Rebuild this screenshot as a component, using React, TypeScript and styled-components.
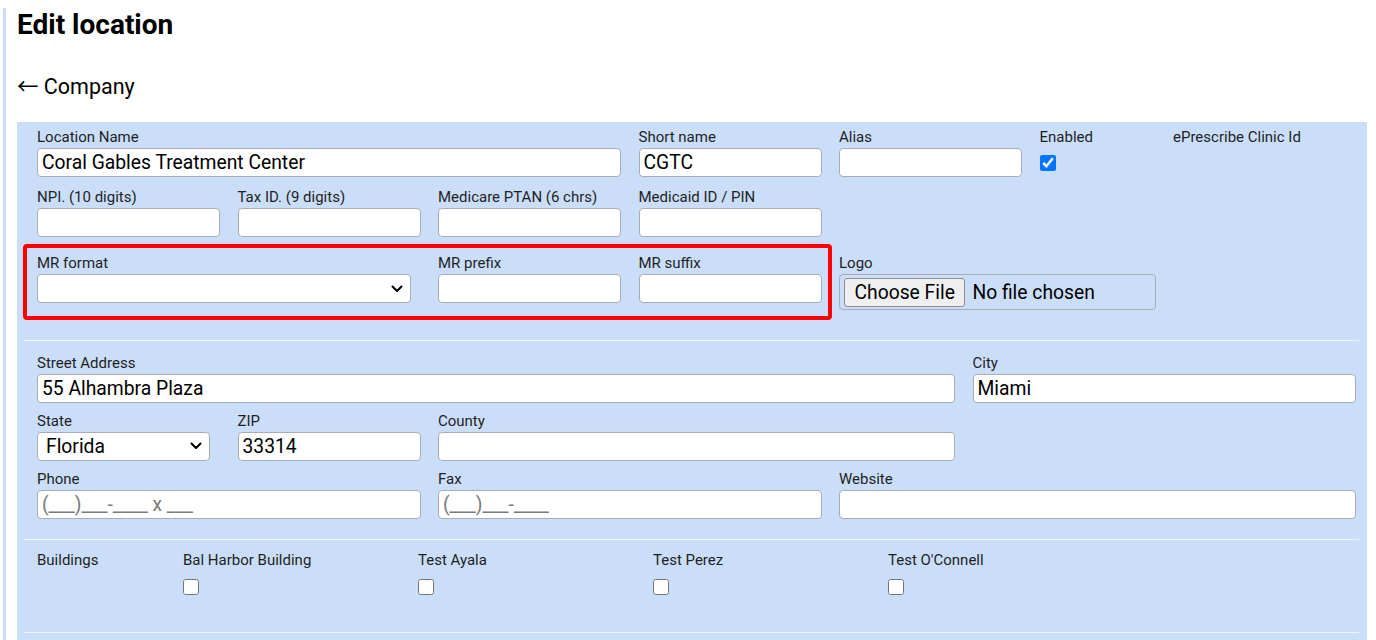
import React from "react";
import styled, { createGlobalStyle } from "styled-components";

const GlobalStyle = createGlobalStyle`
  html, body {
    margin: 0;
    padding: 0;
    background: #ffffff;
  }
  body {
    font-family: Roboto, "Liberation Sans", Arial, sans-serif;
    color: #212121;
  }
  * { box-sizing: border-box; }
`;

const Page = styled.div`
  margin-left: 3px;
  border-left: 3px solid #cadefa;
  padding: 0 9px 0 11px;
  min-height: 100vh;
`;

const Title = styled.h1`
  margin: 8px 0 0;
  font-size: 28px;
  line-height: 33px;
  font-weight: 700;
  color: #000;
`;

const BackLink = styled.a`
  display: block;
  height: 26px;
  margin-top: 33px;
  font-size: 21.5px;
  line-height: 26px;
  color: #000;
  text-decoration: none;
`;

const Arrow = styled.span`
  font-family: "Noto Sans CJK JP", "Liberation Sans", sans-serif;
  line-height: 1;
`;

const Panel = styled.form`
  margin-top: 22px;
  background: #cadefa;
  padding: 0 8px 0 7px;
  min-height: 520px;
`;

const Section = styled.div<{ $top: number; $bottom: number }>`
  padding: ${(p) => p.$top}px 3px ${(p) => p.$bottom}px 13px;
  border-bottom: 1px solid #eef4fe;
`;

const TopGrid = styled.div`
  display: grid;
  grid-template-columns: repeat(5, 183px) 116px 183px;
  column-gap: 17.5px;
  row-gap: 11px;
`;

const AddressGrid = styled.div`
  display: grid;
  grid-template-columns: repeat(4, 183px) 116px 1fr;
  column-gap: 17.5px;
  row-gap: 9px;
`;

const MrRow = styled(TopGrid)`
  margin-top: 7px;
`;

const Field = styled.div<{ $span?: number; $start?: number; $pad?: number }>`
  display: flex;
  flex-direction: column;
  min-width: 0;
  grid-column: ${(p) => (p.$start ? `${p.$start} / ` : "")}span ${(p) => p.$span ?? 1};
  padding-top: ${(p) => p.$pad ?? 0}px;
`;

const Label = styled.label`
  display: block;
  font-size: 15px;
  line-height: 18px;
  margin-bottom: 2px;
  color: #1f1f1f;
  white-space: nowrap;
`;

const TextInput = styled.input`
  height: 29px;
  width: 100%;
  padding: 0 4px;
  border: 1px solid #a9adb3;
  border-radius: 4px;
  background: #fff;
  font-family: Roboto, "Liberation Sans", Arial, sans-serif;
  font-size: 19.3px;
  color: #000;
  outline: none;
  &::placeholder {
    color: #7a7a7a;
  }
`;

const SelectWrap = styled.div<{ $width: number }>`
  position: relative;
  width: ${(p) => p.$width}px;
  height: 29px;
`;

const Select = styled.select`
  appearance: none;
  height: 29px;
  width: 100%;
  padding: 0 28px 0 8px;
  border: 1px solid #a9adb3;
  border-radius: 4px;
  background-color: #fff;
  font-family: Roboto, "Liberation Sans", Arial, sans-serif;
  font-size: 19.3px;
  color: #000;
  outline: none;
`;

const Chevron = styled.svg`
  position: absolute;
  right: 8px;
  top: 50%;
  transform: translateY(-50%);
  pointer-events: none;
`;

const Check = styled.input`
  width: 16px;
  height: 16px;
  margin: 0;
  accent-color: #0075ff;
`;

const CheckSlot = styled.div<{ $top: number }>`
  padding-top: ${(p) => p.$top}px;
  line-height: 0;
`;

const Highlight = styled.div`
  grid-column: 1 / span 4;
  margin: 0 -10px 0 -14px;
  border: 4px solid #ff0000;
  border-radius: 4px;
  padding: 6px 6px 13px 10px;
  display: grid;
  grid-template-columns: 383.5px 183px 183px;
  column-gap: 17.5px;
`;

const FileBox = styled.div`
  height: 36px;
  width: 100%;
  border: 1px solid #a9adb3;
  border-radius: 4px;
  padding: 3px 4px;
  display: flex;
  align-items: center;
  gap: 7px;
`;

const FileButton = styled.button`
  height: 29px;
  padding: 0 9.5px;
  border: 1px solid #8f8f8f;
  border-radius: 3px;
  background: #efefef;
  font-family: Roboto, "Liberation Sans", Arial, sans-serif;
  font-size: 19.3px;
  color: #000;
`;

const FileName = styled.span`
  font-size: 19.3px;
  color: #000;
`;

const BuildingsGrid = styled.div`
  display: grid;
  grid-template-columns: 146px repeat(4, 235px) 1fr;
`;

const Building = styled.div`
  display: flex;
  flex-direction: column;
`;

const BuildingLabel = styled.span`
  font-size: 15px;
  line-height: 17px;
  color: #1f1f1f;
`;

const buildings = ["Bal Harbor Building", "Test Ayala", "Test Perez", "Test O'Connell"];

type DropdownProps = {
  width: number;
  value: string;
  options: { value: string; label: string }[];
};

function Dropdown({ width, value, options }: DropdownProps) {
  return (
    <SelectWrap $width={width}>
      <Select defaultValue={value}>
        {options.map((o) => (
          <option key={o.value} value={o.value}>
            {o.label}
          </option>
        ))}
      </Select>
      <Chevron width="12" height="8" viewBox="0 0 12 8" aria-hidden="true">
        <path d="M1.5 1.5 L6 6 L10.5 1.5" fill="none" stroke="#000" strokeWidth="2" strokeLinecap="round" strokeLinejoin="round" />
      </Chevron>
    </SelectWrap>
  );
}

export default function App() {
  return (
    <>
      <GlobalStyle />
      <Page>
        <Title>Edit location</Title>
        <BackLink href="#">
          <Arrow>←</Arrow> Company
        </BackLink>
        <Panel onSubmit={(e) => e.preventDefault()}>
          <Section $top={6.4} $bottom={20}>
            <TopGrid>
              <Field $span={3}>
                <Label>Location Name</Label>
                <TextInput defaultValue="Coral Gables Treatment Center" />
              </Field>
              <Field>
                <Label>Short name</Label>
                <TextInput defaultValue="CGTC" />
              </Field>
              <Field>
                <Label>Alias</Label>
                <TextInput />
              </Field>
              <Field>
                <Label>Enabled</Label>
                <CheckSlot $top={7}>
                  <Check type="checkbox" defaultChecked />
                </CheckSlot>
              </Field>
              <Field>
                <Label>ePrescribe Clinic Id</Label>
              </Field>

              <Field>
                <Label>NPI. (10 digits)</Label>
                <TextInput />
              </Field>
              <Field>
                <Label>Tax ID. (9 digits)</Label>
                <TextInput />
              </Field>
              <Field>
                <Label>Medicare PTAN (6 chrs)</Label>
                <TextInput />
              </Field>
              <Field>
                <Label>Medicaid ID / PIN</Label>
                <TextInput />
              </Field>
            </TopGrid>

            <MrRow>
              <Highlight>
                <Field>
                  <Label>MR format</Label>
                  <Dropdown
                    width={374}
                    value=""
                    options={[
                      { value: "", label: "" },
                      { value: "numeric", label: "Numeric" },
                    ]}
                  />
                </Field>
                <Field>
                  <Label>MR prefix</Label>
                  <TextInput />
                </Field>
                <Field>
                  <Label>MR suffix</Label>
                  <TextInput />
                </Field>
              </Highlight>
              <Field $span={2} $pad={10}>
                <Label>Logo</Label>
                <FileBox>
                  <FileButton type="button">Choose File</FileButton>
                  <FileName>No file chosen</FileName>
                </FileBox>
              </Field>
            </MrRow>
          </Section>

          <Section $top={12.4} $bottom={20}>
            <AddressGrid>
              <Field $span={5}>
                <Label>Street Address</Label>
                <TextInput defaultValue="55 Alhambra Plaza" />
              </Field>
              <Field>
                <Label>City</Label>
                <TextInput defaultValue="Miami" />
              </Field>

              <Field>
                <Label>State</Label>
                <Dropdown
                  width={173}
                  value="FL"
                  options={[
                    { value: "FL", label: "Florida" },
                    { value: "GA", label: "Georgia" },
                  ]}
                />
              </Field>
              <Field>
                <Label>ZIP</Label>
                <TextInput defaultValue="33314" />
              </Field>
              <Field $span={3}>
                <Label>County</Label>
                <TextInput />
              </Field>

              <Field $start={1} $span={2}>
                <Label>Phone</Label>
                <TextInput placeholder="(___)___-____ x ___" />
              </Field>
              <Field $span={2}>
                <Label>Fax</Label>
                <TextInput placeholder="(___)___-____" />
              </Field>
              <Field $span={2}>
                <Label>Website</Label>
                <TextInput />
              </Field>
            </AddressGrid>
          </Section>

          <Section $top={12} $bottom={37}>
            <BuildingsGrid>
              <BuildingLabel>Buildings</BuildingLabel>
              {buildings.map((name) => (
                <Building key={name}>
                  <BuildingLabel>{name}</BuildingLabel>
                  <CheckSlot $top={10.5}>
                    <Check type="checkbox" />
                  </CheckSlot>
                </Building>
              ))}
            </BuildingsGrid>
          </Section>
        </Panel>
      </Page>
    </>
  );
}
